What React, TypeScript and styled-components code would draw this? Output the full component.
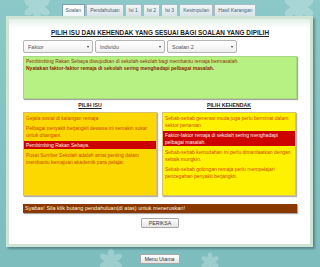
import React from 'react';
import styled, { createGlobalStyle } from 'styled-components';

const GlobalStyle = createGlobalStyle`
  html, body {
    margin: 0;
    padding: 0;
  }
  body {
    width: 320px;
    height: 267px;
    overflow: hidden;
    background: #84c3c4;
    font-family: 'Liberation Sans', Arial, sans-serif;
  }
`;

const Page = styled.div`
  position: relative;
  width: 320px;
  height: 267px;
  display: flex;
  flex-direction: column;
  align-items: center;
  background: linear-gradient(180deg, #8cc8c8 0%, #82c1c2 60%, #7dbdbe 100%);
  overflow: hidden;
`;

const Decor = styled.svg<{ left: number; top: number; size: number }>`
  position: absolute;
  left: ${(p) => p.left}px;
  top: ${(p) => p.top}px;
  width: ${(p) => p.size}px;
  height: ${(p) => p.size}px;
  opacity: 0.25;
  pointer-events: none;
`;

const TabBar = styled.nav`
  position: relative;
  display: flex;
  gap: 1px;
  margin-top: 4px;
  height: 12px;
  margin-left: -2px;
`;

const Tab = styled.div<{ active?: boolean }>`
  box-sizing: border-box;
  height: 12px;
  padding: 0 3px;
  line-height: 10px;
  font-size: 5px;
  color: #46627a;
  border: 1px solid ${(p) => (p.active ? '#7f9fb3' : '#a9bcc4')};
  border-bottom: none;
  background: ${(p) =>
    p.active
      ? 'linear-gradient(180deg, #ffffff 0%, #eef4f7 100%)'
      : 'linear-gradient(180deg, #f2f6f7 0%, #d8e3e7 100%)'};
  white-space: nowrap;
`;

const Panel = styled.div`
  position: relative;
  align-self: flex-start;
  box-sizing: border-box;
  margin-left: 6px;
  width: 307px;
  height: 231px;
  border: 3px solid #cfe4d5;
  box-shadow: 2px 2px 2px rgba(40, 70, 70, 0.45);
  background: #cfe4d5;
`;

const Sheet = styled.div`
  box-sizing: border-box;
  height: 100%;
  padding: 10px 13px 0 14px;
  background: linear-gradient(180deg, #e3f0e7 0px, #ffffff 9px);
  display: flex;
  flex-direction: column;
`;

const Title = styled.h1`
  margin: 0;
  font-size: 6.4px;
  line-height: 8px;
  font-weight: bold;
  text-align: center;
  text-decoration: underline;
  color: #1e1e1e;
`;

const SelectRow = styled.div`
  display: flex;
  gap: 2px;
  margin-top: 3px;
`;

const Select = styled.div`
  box-sizing: border-box;
  width: 70px;
  height: 13px;
  display: flex;
  align-items: center;
  justify-content: space-between;
  padding: 0 3px 0 4px;
  border: 1px solid #b4b4b4;
  border-radius: 2px;
  background: linear-gradient(180deg, #ffffff 0%, #f0f0f0 100%);
  font-size: 5.5px;
  color: #555;
`;

const Caret = styled.span`
  width: 0;
  height: 0;
  border-left: 1.5px solid transparent;
  border-right: 1.5px solid transparent;
  border-top: 2px solid #333;
`;

const Question = styled.div`
  box-sizing: border-box;
  margin-top: 3px;
  height: 43px;
  padding: 1px 2px;
  background: #b7f184;
  border: 1px solid #a8d884;
  box-shadow: 1px 1px 1px rgba(0, 0, 0, 0.35);
  font-size: 5px;
  line-height: 7px;
  color: #8a3200;
`;

const Strong = styled.div`
  font-weight: bold;
  color: #8a2a00;
`;

const Columns = styled.div`
  display: grid;
  grid-template-columns: 134px 134px;
  column-gap: 5px;
  margin-top: 2px;
`;

const ColLabel = styled.div`
  height: 8px;
  line-height: 8px;
  font-size: 5.2px;
  font-weight: bold;
  text-align: center;
  text-decoration: underline;
  color: #1e1e1e;
  margin-bottom: 3px;
`;

const ChoiceBox = styled.div<{ tone: string }>`
  box-sizing: border-box;
  height: 84px;
  padding: 1px 0;
  display: flex;
  flex-direction: column;
  gap: 2px;
  background: ${(p) => p.tone};
  border: 1px solid #d4c070;
  box-shadow: 1px 1px 1px rgba(0, 0, 0, 0.3);
`;

const Choice = styled.div<{ picked?: boolean }>`
  padding: 0.5px 2px;
  font-size: 5px;
  line-height: 7px;
  color: ${(p) => (p.picked ? '#fff2ee' : '#cf4a00')};
  background: ${(p) => (p.picked ? '#cc0000' : 'transparent')};
`;

const Notice = styled.div`
  margin-top: 8px;
  height: 9px;
  line-height: 9px;
  padding-left: 2px;
  font-size: 5.5px;
  color: #fff4dc;
  background: #8a3800;
  box-shadow: 1px 1px 1px rgba(0, 0, 0, 0.35);
`;

const Button = styled.div<{ w: number }>`
  box-sizing: border-box;
  align-self: center;
  width: ${(p) => p.w}px;
  height: 10px;
  line-height: 8px;
  text-align: center;
  font-size: 5.2px;
  color: #333;
  border: 1px solid #a8a8a8;
  border-radius: 1px;
  background: linear-gradient(180deg, #ffffff 0%, #e4e4e4 100%);
`;

const CheckButton = styled(Button)`
  margin-top: 5px;
`;

const MenuButton = styled(Button)`
  position: relative;
  margin-top: 7px;
  margin-left: -1px;
`;

const Flower = ({ left, top, size }: { left: number; top: number; size: number }) => (
  <Decor left={left} top={top} size={size} viewBox="0 0 40 40">
    {[0, 60, 120, 180, 240, 300].map((a) => (
      <ellipse key={a} cx="20" cy="10" rx="5" ry="9" fill="#ffffff" transform={`rotate(${a} 20 20)`} />
    ))}
    <circle cx="20" cy="20" r="4" fill="#ffffff" />
  </Decor>
);

const tabs = ['Soalan', 'Pendahuluan', 'Isi 1', 'Isi 2', 'Isi 3', 'Kesimpulan', 'Hasil Karangan'];

const isuList = [
  'Gejala sosial  di kalangan remaja',
  'Pelbagai penyakit  berjangkit dewasa ini semakin sukar untuk ditangani.',
  'Pembimbing Rakan Sebaya.',
  'Pusat Sumber Sekolah adalah amat penting  dalam membantu kemajuan akademik para pelajar.',
];

const kehendakList = [
  'Sebab-sebab generasi muda juga perlu berminat dalam sektor pertanian.',
  'Faktor-faktor remaja di sekolah sering menghadapi pelbagai masalah.',
  'Sebab-sebab kemudahan ini perlu dimanfaatkan dengan sebaik mungkin.',
  'Sebab-sebab golongan remaja perlu mempelajari pencegahan penyakit berjangkit.',
];

export default function App() {
  return (
    <Page>
      <GlobalStyle />
      <Flower left={22} top={-8} size={30} />
      <Flower left={282} top={-10} size={34} />
      <Flower left={98} top={248} size={26} />
      <Flower left={200} top={252} size={20} />

      <TabBar>
        {tabs.map((t, i) => (
          <Tab key={t} active={i === 0}>
            {t}
          </Tab>
        ))}
      </TabBar>

      <Panel>
        <Sheet>
          <Title>PILIH ISU DAN KEHENDAK YANG SESUAI BAGI SOALAN YANG DIPILIH</Title>

          <SelectRow>
            {['Faktor', 'Individu', 'Soalan 2'].map((s) => (
              <Select key={s}>
                {s}
                <Caret />
              </Select>
            ))}
          </SelectRow>

          <Question>
            Pembimbing Rakan Sebaya  diwujudkan di sekolah-sekolah bagi membantu remaja bermasalah.
            <Strong>Nyatakan faktor-faktor remaja di sekolah sering menghadapi pelbagai masalah.</Strong>
          </Question>

          <Columns>
            <ColLabel>PILIH ISU</ColLabel>
            <ColLabel>PILIH KEHENDAK</ColLabel>
            <ChoiceBox tone="#fcd700">
              {isuList.map((t, i) => (
                <Choice key={t} picked={i === 2}>
                  {t}
                </Choice>
              ))}
            </ChoiceBox>
            <ChoiceBox tone="#fff200">
              {kehendakList.map((t, i) => (
                <Choice key={t} picked={i === 1}>
                  {t}
                </Choice>
              ))}
            </ChoiceBox>
          </Columns>

          <Notice>Syabas! Sila klik butang pendahuluan(di atas) untuk meneruskan!</Notice>

          <CheckButton w={38}>PERIKSA</CheckButton>
        </Sheet>
      </Panel>

      <MenuButton w={40}>Menu Utama</MenuButton>
    </Page>
  );
}
